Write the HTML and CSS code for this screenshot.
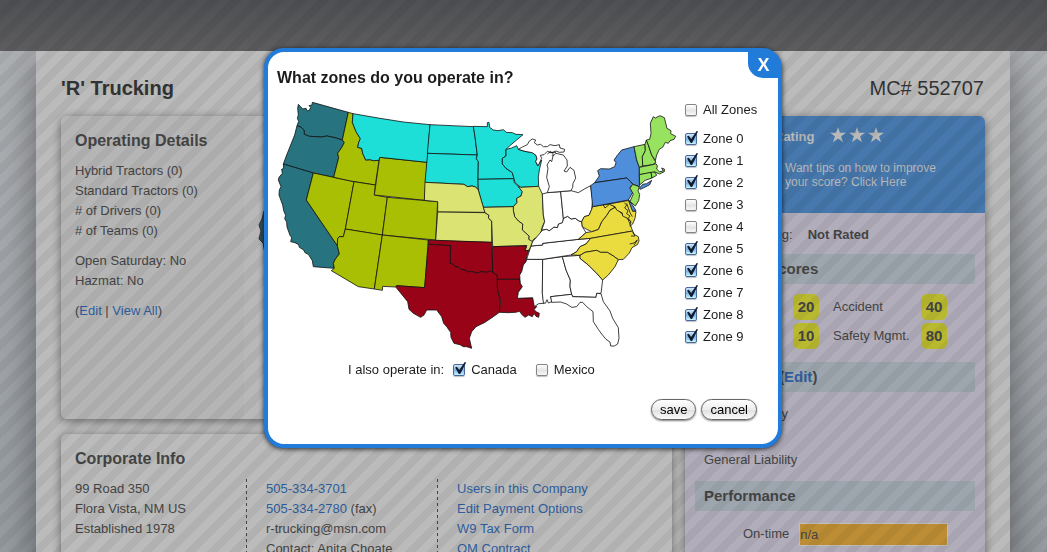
FILE: index.html
```
<!DOCTYPE html>
<html lang="en">
<head>
<meta charset="utf-8">
<title>'R' Trucking</title>
<link rel="stylesheet" href="styles.css">
</head>
<body>
<div class="page">
  <header class="topbar"></header>
  <main class="sheet">
    <div class="heading">
      <h1>'R' Trucking</h1>
      <span class="mc">MC# 552707</span>
    </div>
    <div class="columns">
      <div class="left">
        <section class="panel operating">
          <div class="facts">
            <h2>Operating Details</h2>
            <p>Hybrid Tractors (0)<br>Standard Tractors (0)<br># of Drivers (0)<br># of Teams (0)</p>
            <p>Open Saturday: No<br>Hazmat: No</p>
            <p>(<a href="#">Edit</a> | <a href="#">View All</a>)</p>
          </div>
          <div class="coverage">
            <svg class="mini" viewBox="0 0 60 90" aria-hidden="true"><path d="M6 0 36 9 29 36 60 82 45 84 22 55 7 43 5 32 1 28 3 20 1 14 4 8Z" /></svg>
          </div>
        </section>
        <section class="panel corporate">
          <h2>Corporate Info</h2>
          <div class="thirds">
            <p>99 Road 350<br>Flora Vista, NM US<br>Established 1978</p>
            <p><a href="#">505-334-3701</a><br><a href="#">505-334-2780</a> (fax)<br>r-trucking@msn.com<br>Contact: Anita Choate</p>
            <p><a href="#">Users in this Company</a><br><a href="#">Edit Payment Options</a><br><a href="#">W9 Tax Form</a><br><a href="#">OM Contract</a></p>
          </div>
        </section>
      </div>
      <aside class="panel side">
        <div class="rating">
          <div class="rating-row">
            <strong>Rating</strong>
            <svg class="stars" viewBox="0 0 54 16" aria-label="3 stars"><g fill="#b9b9b9"><path id="star" d="M8 0 9.9 5.7H16L11.1 9.3 13 15.2 8 11.6 3 15.2 4.9 9.3 0 5.7H6.1Z"/><use href="#star" x="19"/><use href="#star" x="38"/></g></svg>
          </div>
          <p>Want tips on how to improve your score? Click Here</p>
        </div>
        <div class="status"><span>Safety Rating:</span><strong>Not Rated</strong></div>
        <h3>SafeStat Scores</h3>
        <div class="scores">
          <span>Driver</span><b>20</b><span>Accident</span><b>40</b>
          <span>Vehicle</span><b>10</b><span>Safety Mgmt.</span><b>80</b>
        </div>
        <h3>Insurance (<a href="#">Edit</a>)</h3>
        <ul class="insurance"><li class="auto">Auto Liability</li><li>Cargo</li><li>General Liability</li></ul>
        <h3>Performance</h3>
        <div class="ontime"><span>On-time</span><span class="meter">n/a</span></div>
      </aside>
    </div>
  </main>
  <div class="stripes"></div>
</div>

<div class="layer">
  <form class="dialog" role="dialog" aria-labelledby="dlg-title">
    <button type="button" class="close" aria-label="Close">X</button>
    <h2 id="dlg-title">What zones do you operate in?</h2>
    <div class="zones">
      <svg class="map" viewBox="0 0 1230 795" role="img" aria-label="Map of zones">
        <g stroke="#111" stroke-width="2.4" stroke-linejoin="round">
          <g fill="#277380">
            <path d="M85 43 92 50 98 57 108 55 112 63 118 61 122 52 117 47 126 45 127 37 235 67 217 150 195 143 170 138 155 141 140 140 118 139 103 133 102 120 94 112 81 107 86 94 82 85 85 75 83 55Z"/>
            <path d="M81 107 94 112 102 120 103 133 118 139 140 140 155 141 170 138 195 143 217 150 223 157 215 173 203 190 206 203 191 262 130 249 40 222 50 195 62 165 74 135Z"/>
            <path d="M40 222 130 249 109 330 129 360 202 467 208 492 196 507 190 520 193 535 130 530 127 512 115 493 106 489 100 479 88 472 86 464 75 458 62 455 65 443 60 436 51 411 50 396 44 386 47 376 41 362 38 345 27 315 28 300 33 290 25 270 27 262 37 250 35 238 41 235Z"/>
          </g>
          <g fill="#a9bf04">
            <path d="M130 249 252 275 226 417 220 440 208 440 203 446 202 467 109 330Z"/>
            <path d="M235 67 249 71 247 97 258 125 271 146 266 158 263 172 275 175 278 190 287 210 300 209 310 212 327 211 316 285 252 275 191 262 206 203 203 190 215 173 223 157 217 150Z"/>
            <path d="M252 275 316 285 313 315 352 322 337 435 226 417Z"/>
            <path d="M329 202 472 217 463 331 313 315Z"/>
            <path d="M352 322 503 335 497 450 337 435Z"/>
            <path d="M226 417 337 435 313 597 265 590 184 542 193 535 190 520 196 507 208 492 202 467 203 446 208 440 220 440Z"/>
            <path d="M337 435 475 450 464 593 380 587 378 591 338 589 337 601 313 597Z"/>
          </g>
          <g fill="#1ddfd8">
            <path d="M249 71 330 85 400 96 480 104 472 217 329 202 327 211 310 212 300 209 287 210 278 190 275 175 263 172 266 158 271 146 258 125 247 97Z"/>
            <path d="M480 104 610 110 615 140 618 165 622 195 472 190Z"/>
            <path d="M473 190 622 195 619 206 625 215 624 268 625 300 617 291 606 288 592 290 582 283 465 277Z"/>
            <path d="M610 109 652 110 652 98 657 97 659 112 670 120 684 122 700 119 709 127 727 128 738 133 759 134 740 150 722 165 708 178 708 198 697 205 697 222 708 235 727 248 732 266 624 268 625 215 619 206 622 195 618 165 615 140Z"/>
            <path d="M624 268 731 266 733 278 745 290 757 305 753 318 740 325 741 338 730 350 640 352 634 332 625 300Z"/>
            <path d="M708 178 725 174 740 167 745 178 765 184 787 188 798 196 801 207 797 214 803 228 815 210 808 240 805 262 806 289 752 292 735 278 732 266 727 248 708 235 697 222 697 205 708 198Z"/>
          </g>
          <g fill="#dbe372">
            <path d="M465 277 582 283 592 290 606 288 617 291 625 300 634 332 645 367 503 366 503 335 463 331Z"/>
            <path d="M503 366 645 368 657 376 655 384 665 393 665 457 497 452Z"/>
            <path d="M752 292 806 289 817 312 820 375 824 395 817 410 812 430 805 440 792 447 783 458 776 448 777 438 762 425 757 420 758 402 745 393 734 380 730 362 730 350 741 338 740 325 753 318 757 305 745 290Z"/>
            <path d="M640 352 730 350 730 362 734 380 745 393 758 402 757 420 777 438 776 448 788 455 782 470 777 481 765 482 770 467 668 470 665 393 655 384 657 376 645 368Z"/>
          </g>
          <g fill="#990318">
            <path d="M475 450 665 457 668 547 660 543 650 547 635 545 620 549 605 544 595 546 582 539 573 539 565 531 556 531 550 523 540 520 542 467 475 463Z"/>
            <path d="M475 463 542 467 540 520 550 523 556 531 565 531 573 539 582 539 595 546 605 544 620 549 635 545 650 547 660 543 668 547 682 555 682 595 690 628 688 667 670 680 645 697 618 710 605 725 598 745 605 775 590 770 580 770 570 764 552 760 543 742 542 727 530 710 521 700 515 680 500 660 470 660 462 675 452 682 430 670 417 658 413 635 378 592 380 587 464 593Z"/>
            <path d="M667 470 770 467 765 482 777 481 770 500 768 515 760 525 755 545 749 555 750 568 682 568 682 555 668 547Z"/>
            <path d="M682 568 750 568 751 580 757 590 745 607 742 625 788 623 792 640 800 650 792 659 800 666 808 670 806 682 798 679 792 670 787 680 776 675 765 682 757 675 748 664 737 667 715 668 688 667 692 630 683 600Z"/>
          </g>
          <g fill="#fff">
            <path d="M770 508 818 508 817 610 822 640 806 641 793 650 788 623 742 625 745 607 757 590 751 580 750 568 749 555 755 545 760 525 768 515Z"/>
            <path d="M818 508 877 500 888 540 901 570 900 590 905 613 842 620 846 635 835 639 831 629 826 640 820 638 817 610Z"/>
            <path d="M877 500 930 496 930 505 955 525 980 550 998 570 993 610 980 610 978 622 908 620 905 613 900 590 901 570 888 540Z"/>
            <path d="M842 620 905 613 908 620 978 622 980 610 993 611 1000 635 1020 663 1028 685 1045 713 1047 745 1043 762 1033 768 1022 768 1020 756 1008 748 995 732 985 718 970 695 969 665 950 650 938 637 930 637 920 650 905 652 890 642 872 636 845 637Z"/>
            <path d="M783 468 818 465 818 460 925 448 962 445 948 462 930 470 920 485 903 495 818 508 770 508Z"/>
            <path d="M818 420 830 418 838 422 852 411 862 413 865 402 877 398 880 385 893 379 903 387 916 385 927 393 935 395 937 410 948 428 925 448 818 460 818 465 783 468 788 455Z"/>
            <path d="M817 312 832 308 872 305 880 385 877 398 865 402 862 413 852 411 838 422 830 418 815 420 824 395 820 375Z"/>
            <path d="M872 305 903 302 925 308 945 296 962 287 968 330 965 358 957 376 943 380 935 395 927 393 916 385 903 387 893 379 880 385Z"/>
            <path d="M832 308 838 290 830 262 834 235 831 225 840 210 845 215 849 198 858 190 880 195 891 210 892 228 882 243 890 246 900 232 912 241 917 265 909 280 908 292 903 302Z"/>
            <path d="M745 178 757 171 772 164 778 153 787 147 797 150 793 158 802 165 812 163 820 170 832 170 840 164 855 167 868 164 870 174 884 178 882 186 868 187 858 183 845 188 832 184 822 194 811 196 815 205 804 228 797 214 801 207 798 196 787 188 765 184Z"/>
            <path fill="none" d="M832 192 842 184 850 192 846 198M838 188 858 187"/>
          </g>
          <g fill="#eadb3f">
            <path d="M925 448 948 428 965 425 985 418 995 395 1010 376 1020 360 1035 352 1045 362 1060 375 1073 386 1080 402 1088 423 962 445Z"/>
            <path d="M968 350 1020 341 1035 352 1020 360 1010 376 995 395 985 418 965 425 950 418 937 410 935 395 943 380 957 376 965 358Z"/>
            <path d="M1000 345 1078 331 1088 362 1098 365 1095 385 1088 402 1080 409 1082 395 1075 386 1058 378 1057 369 1040 360 1035 350 1018 343 1005 354Z"/>
            <path d="M903 495 920 485 930 470 948 462 962 445 1088 423 1094 434 1105 440 1107 453 1102 464 1086 473 1078 489 1060 508 1045 509 1030 498 1012 487 992 487 980 481 945 487 930 496Z"/>
            <path d="M930 496 945 487 980 481 992 487 1012 487 1030 498 1045 509 1035 530 1015 555 998 570 980 550 955 525 930 505Z"/>
            <path fill="none" d="M1063 338 1070 345 1064 354 1074 362 1070 371 1080 378 1074 386 1084 397M1070 340 1080 368 1087 380M1088 427 1095 438 1083 438M1079 462 1092 459 1102 450 1092 466"/>
          </g>
          <g fill="#4f8edb">
            <path d="M974 278 988 258 983 242 992 236 1018 237 1034 230 1038 218 1032 210 1042 196 1055 180 1092 170 1096 190 1100 210 1108 232 1108 290 1090 283 1082 275 1070 264Z"/>
            <path d="M962 287 974 278 1070 264 1082 275 1088 283 1080 293 1088 308 1075 330 968 350Z"/>
            <path d="M1108 295 1118 283 1130 281 1145 271 1139 284 1120 294 1110 298Z"/>
            <path d="M1076 333 1083 338 1098 362 1088 364Z"/>
          </g>
          <g fill="#97e25e">
            <path d="M1088 283 1108 290 1104 303 1109 313 1106 332 1096 348 1080 334 1090 312 1080 295Z"/>
            <path d="M1092 170 1125 163 1126 182 1117 200 1118 228 1108 232 1100 210Z"/>
            <path d="M1125 163 1129 150 1135 165 1145 195 1158 217 1148 224 1118 228 1117 200 1126 182Z"/>
            <path d="M1129 150 1139 148 1143 130 1141 100 1150 80 1156 84 1170 77 1183 83 1191 115 1203 122 1202 131 1217 139 1212 148 1200 152 1195 160 1186 157 1178 172 1168 178 1160 195 1156 212 1145 195 1135 165Z"/>
            <path d="M1108 232 1148 224 1158 221 1162 228 1160 237 1168 245 1180 243 1175 234 1183 237 1183 245 1168 252 1155 246 1108 254Z"/>
            <path d="M1108 254 1143 247 1146 264 1125 271 1109 285Z"/>
            <path d="M1143 247 1155 246 1160 256 1146 264Z"/>
          </g>
        </g>
      </svg>
      <div class="zone-list">
        <label class="all"><input type="checkbox">All Zones</label>
        <label><input type="checkbox" checked>Zone 0</label>
        <label><input type="checkbox" checked>Zone 1</label>
        <label><input type="checkbox" checked>Zone 2</label>
        <label><input type="checkbox">Zone 3</label>
        <label><input type="checkbox">Zone 4</label>
        <label><input type="checkbox" checked>Zone 5</label>
        <label><input type="checkbox" checked>Zone 6</label>
        <label><input type="checkbox" checked>Zone 7</label>
        <label><input type="checkbox" checked>Zone 8</label>
        <label><input type="checkbox" checked>Zone 9</label>
      </div>
    </div>
    <div class="also">
      <span>I also operate in:</span>
      <label><input type="checkbox" checked>Canada</label>
      <label><input type="checkbox">Mexico</label>
    </div>
    <div class="actions">
      <button type="button">save</button>
      <button type="button">cancel</button>
    </div>
  </form>
</div>
</body>
</html>
```
FILE: styles.css
```
* { box-sizing: border-box; }
html, body { height: 100%; }
body {
  margin: 0;
  overflow: hidden;
  font: 13px/20px "Liberation Sans", Arial, sans-serif;
  color: #444;
}
h1, h2, h3, p, ul { margin: 0; padding: 0; }
a { color: #2f5f9e; text-decoration: none; }

.page {
  position: relative;
  display: flex;
  flex-direction: column;
  height: 100%;
  overflow: hidden;
  background: linear-gradient(#b1b3b6, #979ca1);
}
.topbar {
  flex: none;
  height: 51px;
  background: linear-gradient(#4f5053, #5d5d5f);
}
.sheet {
  flex: 1 0 auto;
  margin: 0 37px 0 36px;
  padding: 0 25px;
  background: #bbb;
  box-shadow: 0 10px 36px rgba(0, 0, 0, .4);
  clip-path: inset(0 -60px -60px -60px);
}
.heading {
  display: flex;
  justify-content: space-between;
  padding: 26px 1px 16px 0;
  font-size: 20px;
  line-height: 23px;
  color: #333;
}
h1 { font-size: 20px; }
.columns { display: flex; gap: 13px; }
.left {
  flex: 1;
  display: flex;
  flex-direction: column;
  gap: 15px;
}
.panel {
  border-radius: 6px;
  background: #bbb;
  box-shadow: 0 2px 10px rgba(0, 0, 0, .45);
}
.panel h2 {
  font-size: 16px;
  line-height: 22px;
  padding-bottom: 9px;
}
.operating { display: flex; min-height: 303px; background: #b8b8b8; }
.facts { width: 183px; padding: 14px 0 0 14px; background: #b5b5b5; border-radius: 6px 0 0 6px; }
.facts p { padding-bottom: 10px; }
.coverage { flex: 1; padding: 95px 14px 0; }
.mini { width: 60px; height: 90px; fill: #33525c; stroke: #333; }
.corporate { padding: 14px 14px 20px; }
.thirds { display: grid; grid-template-columns: 171px 191px 1fr; }
.thirds p { min-height: 140px; }
.thirds p + p {
  padding-left: 20px;
  background: repeating-linear-gradient(#444 0 3px, transparent 3px 6px) 0 0 / 1px 100% no-repeat;
}

.side { width: 300px; background: #b1adbb; overflow: hidden; }
.rating {
  height: 97px;
  padding: 11px 45px 0 89px;
  background: #4678ad;
  color: #b9b9b9;
}
.rating-row { display: flex; gap: 14px; }
.rating-row strong { width: 42px; }
.stars { width: 54px; height: 16px; }
.rating p { padding: 14px 0 0 11px; font-size: 12px; line-height: 14px; }
.status { display: flex; gap: 15px; padding: 12px 0 9px 26px; }
.side h3 {
  margin: 0 10px;
  padding: 0 9px;
  font-size: 15px;
  line-height: 30px;
  background: #9da6ae;
}
.scores {
  display: grid;
  grid-template-columns: 74px 26px 74px 26px;
  column-gap: 14px;
  row-gap: 3px;
  padding: 10px 0 13px 20px;
  line-height: 26px;
  white-space: nowrap;
}
.scores b {
  border-radius: 6px;
  background: #b9b92f;
  text-align: center;
  font-size: 15px;
}
.insurance { list-style: none; padding: 10px 19px; line-height: 23px; }
.insurance .auto { width: 84px; text-align: right; }
.ontime { display: flex; gap: 10px; padding: 12px 37px 20px 58px; line-height: 22px; }
.meter { flex: 1; height: 23px; border: 1px solid #c4bfb5; background: #bd8d35; }

.stripes {
  position: absolute;
  inset: 0;
  pointer-events: none;
  background: linear-gradient(135deg, transparent 25%, rgba(0, 0, 0, .05) 25% 50%, transparent 50% 75%, rgba(0, 0, 0, .05) 75%) 0 0 / 22px 22px;
}

.layer {
  position: fixed;
  inset: 0;
  display: flex;
  justify-content: center;
  align-items: flex-start;
  padding: 48px 1px 0 0;
}
.dialog {
  position: relative;
  width: 518px;
  padding: 16px 0 24px;
  border: 4px solid #217bd9;
  border-radius: 20px;
  background: #fff;
  color: #1c1c1c;
  box-shadow: 0 1px 5px rgba(0, 0, 0, .8);
}
.dialog h2 { padding-left: 9px; font-size: 16px; line-height: 20px; }
.close {
  position: absolute;
  top: -1px;
  right: -1px;
  width: 31px;
  height: 27px;
  padding: 0;
  border: 0;
  border-radius: 0 15px 0 15px;
  background: #217bd9;
  color: #fff;
  font: bold 18px/24px "Liberation Sans", Arial, sans-serif;
}
.zones { display: flex; gap: 5px; padding: 2px 0 0 2px; }
.map { width: 410px; height: 265px; }
.zone-list { display: flex; flex-direction: column; padding-top: 9px; }
.dialog label { display: flex; align-items: center; gap: 6px; height: 22px; }
.dialog .all { margin-bottom: 7px; }
.dialog input {
  appearance: none;
  position: relative;
  width: 12px;
  height: 12px;
  margin: 0;
  border: 1px solid #858585;
  border-radius: 2px;
  background: linear-gradient(#fff, #e4e4e4 55%, #f8f8f8);
  box-shadow: 0 1px 1px rgba(0, 0, 0, .25);
}
.dialog input:checked {
  border-color: #47699b;
  background: linear-gradient(#d5e8f9, #79b3e8 50%, #c9f5ff);
}
.dialog input:checked::after {
  content: "";
  position: absolute;
  left: 1px;
  top: -3px;
  width: 11px;
  height: 12px;
  background: #111c2c;
  clip-path: polygon(0 45%, 16% 40%, 38% 66%, 88% 0, 100% 4%, 46% 100%, 34% 100%);
}
.also { display: flex; align-items: center; padding: 4px 0 0 80px; }
.also label { margin-left: 9px; }
.also label + label { margin-left: 19px; }
.actions { display: flex; justify-content: flex-end; gap: 5px; padding: 18px 21px 0; }
.actions button {
  height: 21px;
  padding: 0 8px;
  border: 1px solid #666;
  border-radius: 11px;
  background: linear-gradient(#fff, #ececec 50%, #e0e0e0 52%, #fafafa);
  box-shadow: 0 1px 2px rgba(0, 0, 0, .5);
  color: #000;
  font: 13px/18px "Liberation Sans", Arial, sans-serif;
}
```
